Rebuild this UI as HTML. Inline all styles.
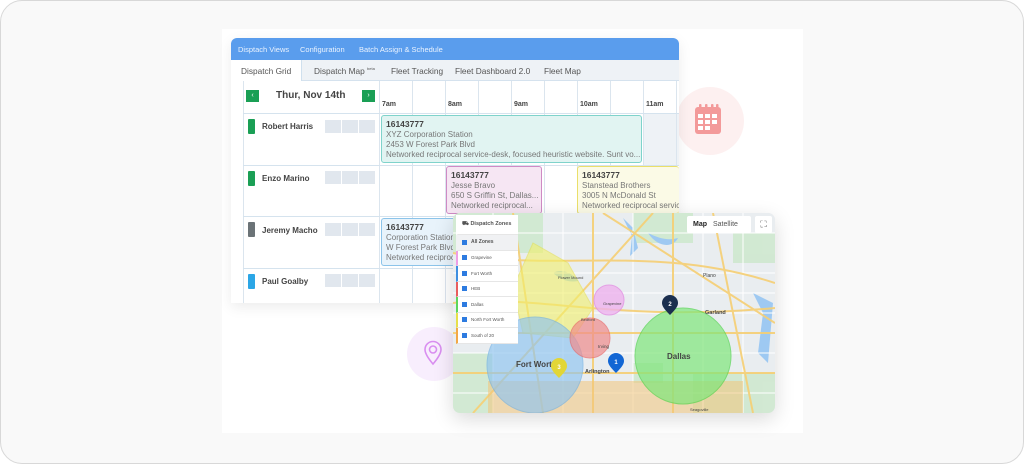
<!DOCTYPE html>
<html><head><meta charset="utf-8"><style>
*{box-sizing:border-box;margin:0;padding:0}
body{width:1024px;height:464px;background:#fff;font-family:"Liberation Sans",sans-serif;position:relative;overflow:hidden}
.card{position:absolute;left:0;top:0;width:1024px;height:464px;border:1px solid #d8d8d8;border-radius:22px;background:#f9f9f9}
.inner{position:absolute;left:222px;top:29px;width:581px;height:404px;background:#fff}
.disp{position:absolute;left:231px;top:38px;width:448px;height:265px;background:#fff;border-radius:6px 6px 0 0;box-shadow:0 4px 14px rgba(0,0,0,.08);overflow:hidden}
.hdr{position:absolute;left:0;top:0;width:448px;height:22px;background:#5a9ded;color:#eaf3ff;font-size:7.5px}
.hdr span{position:absolute;top:7px}
.tabs{position:absolute;left:0;top:22px;width:448px;height:21px;background:#eef2f6;font-size:8.3px;color:#555;border-bottom:1px solid #d5e2ee}
.tabs span{position:absolute;top:6px}
.tabs .act{position:absolute;left:0;top:0;width:71px;height:21px;background:#fff;border-right:1px solid #cfe0ee}
.pos{position:absolute}
.vl{position:absolute;width:1px;background:#dbe5ee}
.hl{position:absolute;height:1px;background:#d5e3ee}
.nm{position:absolute;font-size:8px;font-weight:bold;color:#444}
.bar{position:absolute;width:7px;height:15px;border-radius:1px}
.sq{position:absolute;width:16px;height:13px;background:#e1e7ee}
.job{position:absolute;border:1.5px solid;border-radius:3px;font-size:8px;color:#777;padding:3px 4px;line-height:10px;white-space:nowrap;overflow:hidden}
.job b{color:#444;font-size:8.5px}
.tm{position:absolute;top:101px;font-size:7px;font-weight:bold;color:#444}
.map{position:absolute;left:453px;top:213px;width:322px;height:200px;border-radius:7px;overflow:hidden;box-shadow:0 6px 20px rgba(0,0,0,.15);background:#eceff1}
.zp{position:absolute;left:3px;top:2px;width:62px;background:#fff;font-size:4.5px;color:#555}
.zp div{height:15.5px;border-bottom:1px solid #e6e6e6;display:flex;align-items:center;padding-left:4px;border-left:2px solid transparent}
.cb{display:inline-block;width:5px;height:5px;background:#2d7be0;margin-right:4px}
</style></head><body>
<div class="card"></div>
<div class="inner"></div>
<div class="pos" style="left:676px;top:87px;width:68px;height:68px;border-radius:50%;background:#fdf0f0"></div>
<svg class="pos" style="left:693px;top:103px" width="30" height="32" viewBox="0 0 30 32"><rect x="2" y="4" width="26" height="27" rx="3" fill="#f39a9a"/><rect x="6" y="1" width="2.5" height="6" rx="1" fill="#f39a9a"/><rect x="12" y="1" width="2.5" height="6" rx="1" fill="#f39a9a"/><rect x="18" y="1" width="2.5" height="6" rx="1" fill="#f39a9a"/><rect x="23" y="1" width="2.5" height="6" rx="1" fill="#f39a9a"/><g fill="#fff"><rect x="5" y="11" width="5" height="4"/><rect x="12" y="11" width="5" height="4"/><rect x="19" y="11" width="5" height="4"/><rect x="5" y="17" width="5" height="4"/><rect x="12" y="17" width="5" height="4"/><rect x="19" y="17" width="5" height="4"/><rect x="5" y="23" width="5" height="4"/><rect x="12" y="23" width="5" height="4"/></g></svg>
<div class="pos" style="left:407px;top:327px;width:54px;height:54px;border-radius:50%;background:#f8eefd"></div>
<svg class="pos" style="left:422px;top:340px" width="22" height="26" viewBox="0 0 22 26"><path d="M11 24C5 17 3 13 3 9.5a8 8 0 0 1 16 0C19 13 17 17 11 24z" fill="none" stroke="#d98ef0" stroke-width="1.6"/><circle cx="11" cy="9.5" r="3.5" fill="none" stroke="#d98ef0" stroke-width="1.6"/></svg>

<div class="disp">
<div class="hdr"><span style="left:7px">Disptach Views</span><span style="left:69px">Configuration</span><span style="left:128px">Batch Assign &amp; Schedule</span></div>
<div class="tabs"><div class="act"></div><span style="left:10px">Dispatch Grid</span><span style="left:83px">Dispatch Map <sup style="font-size:4px">beta</sup></span><span style="left:160px">Fleet Tracking</span><span style="left:224px">Fleet Dashboard 2.0</span><span style="left:313px">Fleet Map</span></div>
</div>
<div class="pos" style="left:643px;top:113px;width:36px;height:52px;background:#eef2f6"></div>
<div class="vl" style="left:243px;top:81px;height:222px"></div>
<div class="vl" style="left:379px;top:81px;height:222px"></div>
<div class="vl" style="left:412px;top:81px;height:222px"></div>
<div class="vl" style="left:445px;top:81px;height:222px"></div>
<div class="vl" style="left:478px;top:81px;height:222px"></div>
<div class="vl" style="left:511px;top:81px;height:222px"></div>
<div class="vl" style="left:544px;top:81px;height:222px"></div>
<div class="vl" style="left:577px;top:81px;height:222px"></div>
<div class="vl" style="left:610px;top:81px;height:222px"></div>
<div class="vl" style="left:643px;top:81px;height:222px"></div>
<div class="vl" style="left:676px;top:81px;height:222px"></div>
<div class="hl" style="left:243px;top:113px;width:436px"></div>
<div class="hl" style="left:243px;top:165px;width:436px"></div>
<div class="hl" style="left:243px;top:216px;width:436px"></div>
<div class="hl" style="left:243px;top:268px;width:436px"></div>
<div class="pos" style="left:246px;top:90px;width:13px;height:12px;background:#1a9f55;color:#fff;font-size:7px;text-align:center;line-height:12px">‹</div>
<div class="pos" style="left:362px;top:90px;width:13px;height:12px;background:#1a9f55;color:#fff;font-size:7px;text-align:center;line-height:12px">›</div>
<div class="pos" style="left:276px;top:90px;font-size:10px;font-weight:bold;color:#444">Thur, Nov 14th</div>
<div class="tm" style="left:382px">7am</div><div class="tm" style="left:448px">8am</div><div class="tm" style="left:514px">9am</div><div class="tm" style="left:580px">10am</div><div class="tm" style="left:646px">11am</div>
<div class="bar" style="left:248px;top:119px;background:#1a9f55"></div><div class="nm" style="left:262px;top:122px">Robert Harris</div>
<div class="bar" style="left:248px;top:171px;background:#1a9f55"></div><div class="nm" style="left:262px;top:174px">Enzo Marino</div>
<div class="bar" style="left:248px;top:222px;background:#6b7377"></div><div class="nm" style="left:262px;top:226px">Jeremy Macho</div>
<div class="bar" style="left:248px;top:274px;background:#2ba6e6"></div><div class="nm" style="left:262px;top:277px">Paul Goalby</div>
<div class="sq" style="left:325px;top:120px"></div><div class="sq" style="left:342px;top:120px"></div><div class="sq" style="left:359px;top:120px"></div>
<div class="sq" style="left:325px;top:171px"></div><div class="sq" style="left:342px;top:171px"></div><div class="sq" style="left:359px;top:171px"></div>
<div class="sq" style="left:325px;top:223px"></div><div class="sq" style="left:342px;top:223px"></div><div class="sq" style="left:359px;top:223px"></div>
<div class="sq" style="left:325px;top:274px"></div><div class="sq" style="left:342px;top:274px"></div><div class="sq" style="left:359px;top:274px"></div>
<div class="job" style="left:381px;top:115px;width:261px;height:48px;background:#e1f4f2;border-color:#7fd3cb"><b>16143777</b><br>XYZ Corporation Station<br>2453 W Forest Park Blvd<br>Networked reciprocal service-desk, focused heuristic website. Sunt vo...</div>
<div class="job" style="left:446px;top:166px;width:96px;height:48px;background:#f6e6f3;border-color:#cf8ac4"><b>16143777</b><br>Jesse Bravo<br>650 S Griffin St, Dallas...<br>Networked reciprocal...</div>
<div class="job" style="left:577px;top:166px;width:102px;height:48px;background:#fbfae6;border-color:#eadf6a;border-right:none"><b>16143777</b><br>Stanstead Brothers<br>3005 N McDonald St<br>Networked reciprocal service</div>
<div class="job" style="left:381px;top:218px;width:80px;height:48px;background:#e8f3fb;border-color:#8cc4ea;border-right:none"><b>16143777</b><br>Corporation Station<br>W Forest Park Blvd<br>Networked reciprocal</div>

<div class="map">
<svg width="322" height="200" viewBox="0 0 322 200" style="position:absolute;left:0;top:0">
<rect width="322" height="200" fill="#e9edf0"/>
<g fill="#cfe8cf" opacity=".9"><rect x="0" y="0" width="90" height="40"/><rect x="240" y="160" width="82" height="40"/><rect x="0" y="140" width="40" height="60"/><rect x="180" y="0" width="60" height="30"/><rect x="280" y="20" width="42" height="30"/><rect x="180" y="150" width="30" height="20"/></g>
<g fill="#9ec9f2"><path d="M170 5l10 10 5 20-8 8 2-20z"/><path d="M100 60c8-5 20 0 25 8-10 2-18-2-25-8z"/><path d="M300 80l10 20-5 40 10 10 5-60z"/><path d="M195 20c10 5 20 8 30 5-5 10-20 10-30-5z"/></g>
<g stroke="#fff" stroke-width="1" fill="none"><path d="M0 80H322"/><path d="M0 100H322"/><path d="M180 0V200"/><path d="M110 0V200"/><path d="M0 180H322"/><path d="M0 60H322"/><path d="M0 140H322"/><path d="M40 0V200"/><path d="M250 0V200"/><path d="M290 0V200"/><path d="M0 20H322"/></g>
<g stroke="#f6cf73" stroke-width="2" fill="none" opacity=".9"><path d="M0 120H322"/><path d="M0 160H322"/><path d="M140 0V200"/><path d="M60 0L90 200"/><path d="M220 0V200"/><path d="M0 40C100 60 200 30 322 70"/><path d="M260 0L300 200"/><path d="M20 200L200 0"/><path d="M150 0L322 110"/><path d="M0 90C80 80 160 110 322 95"/></g>
<path d="M35 168H290V200H35z" fill="#f3c57a" opacity=".55"/>
<polygon points="80,30 115,50 140,95 120,125 70,120 60,75" fill="#f2f06a" opacity=".6" stroke="#e6e04a"/>
<circle cx="82" cy="152" r="48" fill="#8ec4f0" opacity=".65" stroke="#6fb0e6"/>
<circle cx="230" cy="143" r="48" fill="#7fe67a" opacity=".7" stroke="#52d44e"/>
<circle cx="137" cy="125" r="20" fill="#f08c8c" opacity=".7" stroke="#e86a6a"/>
<circle cx="156" cy="87" r="15" fill="#eeb3ee" opacity=".8" stroke="#e28de2"/>
<g font-family="Liberation Sans" fill="#444"><text x="63" y="154" font-size="8" font-weight="bold">Fort Worth</text><text x="214" y="146" font-size="8" font-weight="bold">Dallas</text><text x="132" y="160" font-size="5.5" font-weight="bold">Arlington</text><text x="145" y="135" font-size="4.5">Irving</text><text x="252" y="101" font-size="5.5" font-weight="bold">Garland</text><text x="250" y="64" font-size="5">Plano</text><text x="128" y="108" font-size="4">Bedford</text><text x="150" y="92" font-size="4">Grapevine</text><text x="105" y="66" font-size="4">Flower Mound</text><text x="237" y="198" font-size="4">Seagoville</text></g>
<g font-family="Liberation Sans" font-size="6" font-weight="bold" fill="#fff" text-anchor="middle">
<path d="M163 160c-6-6-8-9-8-12a8 8 0 0 1 16 0c0 3-2 6-8 12z" fill="#1266d4"/><text x="163" y="151">1</text>
<path d="M217 102c-6-6-8-9-8-12a8 8 0 0 1 16 0c0 3-2 6-8 12z" fill="#1b2f4f"/><text x="217" y="93">2</text>
<path d="M106 165c-6-6-8-9-8-12a8 8 0 0 1 16 0c0 3-2 6-8 12z" fill="#e2d637"/><text x="106" y="156">3</text></g>
</svg>
<div class="zp">
 <div style="font-size:5.5px;font-weight:bold;height:20px">⛟&nbsp;Dispatch Zones</div>
 <div style="background:#f0f1f3;font-weight:bold;font-size:5px"><span class="cb"></span>All Zones</div>
 <div style="border-left-color:#ee9ee6"><span class="cb"></span>Grapevine</div>
 <div style="border-left-color:#3f8fe0"><span class="cb"></span>Fort Worth</div>
 <div style="border-left-color:#e85d5d"><span class="cb"></span>HEB</div>
 <div style="border-left-color:#5cd65a"><span class="cb"></span>Dallas</div>
 <div style="border-left-color:#e6e04a"><span class="cb"></span>North Fort Worth</div>
 <div style="border-left-color:#f2a846"><span class="cb"></span>South of 20</div>
</div>
<div class="pos" style="left:234px;top:3px;width:64px;height:17px;background:#fff;font-size:7px;display:flex;align-items:center;border-radius:2px"><b style="padding:0 6px;color:#222">Map</b><span style="color:#555">Satellite</span></div>
<div class="pos" style="left:302px;top:3px;width:17px;height:17px;background:#fff;font-size:9px;text-align:center;line-height:17px;color:#555;border-radius:2px">⛶</div>
</div>
</body></html>
